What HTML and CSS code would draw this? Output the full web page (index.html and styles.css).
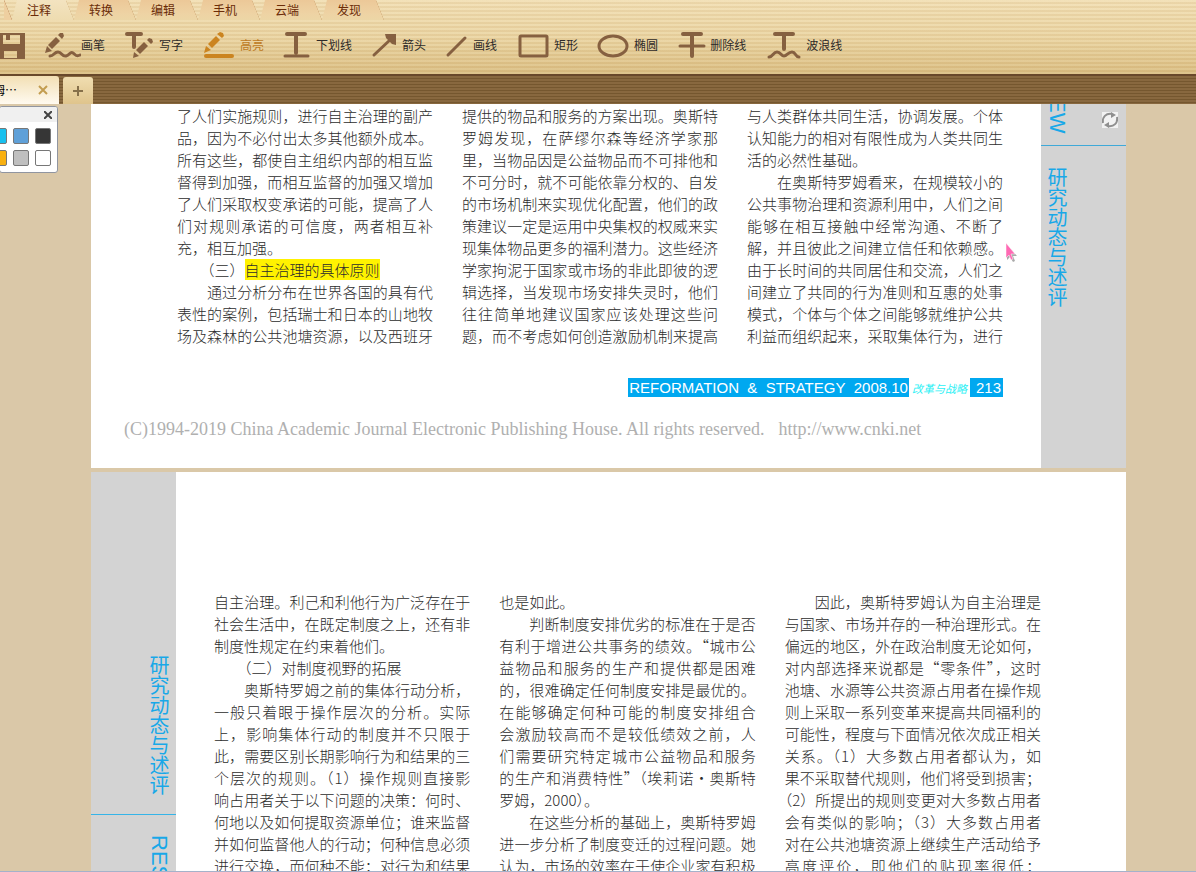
FILE: index.html
```html
<!DOCTYPE html>
<html lang="zh-CN">
<head>
<meta charset="utf-8">
<title>PDF 阅读器</title>
<link rel="stylesheet" href="styles.css">
</head>
<body>
<div class="app">
<header class="ribbon">
  <nav class="menu">
    <button class="menu-tab is-active">注释</button><button class="menu-tab">转换</button><button class="menu-tab">编辑</button><button class="menu-tab">手机</button><button class="menu-tab">云端</button><button class="menu-tab">发现</button>
  </nav>
  <div class="tools">
    <button class="tool" aria-label="保存"><svg width="26" height="30" viewBox="0 30 26 30"><path fill="#866040" fill-rule="evenodd" d="M0 33H25V59H0ZM3 35V44H20V35ZM4 51V58H17V51Z"/><path fill="#866040" d="M6 35h4v5h-4z"/></svg></button>
    <button class="tool"><svg width="36" height="30" viewBox="45 30 36 30"><path d="M45 53l2-7 5 5zM48 45l8-8 4 4-8 8zM58 35l2-2 3 0 1 3-2 3z" fill="#866040"/><path class="ln" d="M50 56c4 0 4-4 8-4s4 5 8 4 4-5 7-3 3 4 7 2"/></svg>画笔</button>
    <button class="tool"><svg width="35" height="30" viewBox="124 30 35 30"><path class="ln thick" d="M127 34H141M134 34V47"/><path fill="#866040" d="M133 58l1-6 5 4zM136 50l8-8 4 4-8 8zM147 40l2-2 3 1 1 3-2 2z"/></svg>写字</button>
    <button class="tool is-on"><svg width="38" height="30" viewBox="202 30 38 30"><path fill="#cb8420" d="M204 53l2-7 5 4zM208 44l8-8 4 4-8 8zM217 34l3-2 3 1 1 3-2 2z"/><path d="M206 56H232" stroke="#cb8420" stroke-width="4" stroke-linecap="round"/></svg>高亮</button>
    <button class="tool"><svg width="33" height="30" viewBox="283 30 33 30"><path class="ln thick" d="M287 34H305M296 34V53"/><path class="ln" d="M285 56H308"/></svg>下划线</button>
    <button class="tool"><svg width="31" height="30" viewBox="371 30 31 30"><path class="ln" d="M374 55L391 39"/><path fill="#866040" d="M385 34h11v11l-4-1-6-6z"/></svg>箭头</button>
    <button class="tool"><svg width="28" height="30" viewBox="445 30 28 30"><path class="ln" d="M448 55L465 38"/></svg>画线</button>
    <button class="tool"><svg width="38" height="30" viewBox="516 30 38 30"><rect class="ln" x="520" y="36" width="27" height="20" rx="1"/></svg>矩形</button>
    <button class="tool"><svg width="37" height="30" viewBox="597 30 37 30"><ellipse class="ln" cx="613" cy="46" rx="14" ry="10"/></svg>椭圆</button>
    <button class="tool"><svg width="33" height="30" viewBox="677 30 33 30"><path class="ln thick" d="M683 34H701M692 34V56"/><path class="ln" d="M680 46H704"/></svg>删除线</button>
    <button class="tool"><svg width="41" height="30" viewBox="765 30 41 30"><path class="ln thick" d="M775 34H793M784 34V49"/><path class="ln" d="M769 57c4 0 4-5 8-5s4 4 7 4 4-4 8-4 3 5 7 5"/></svg>波浪线</button>
  </div>
</header>
<div class="tabbar">
  <div class="doc-tab"><span class="doc-name">姆⋯</span><button class="tab-close" aria-label="关闭标签"><svg width="10" height="10" viewBox="0 0 10 10"><path d="M1 1L9 9M9 1L1 9" stroke="#c39d50" stroke-width="2"/></svg></button></div>
  <button class="new-tab" aria-label="新标签"><svg width="12" height="12" viewBox="0 0 12 12"><path d="M6 1V11M1 6H11" stroke="#86704a" stroke-width="2"/></svg></button>
</div>
<main class="viewer">
  <article class="page">
    <div class="sheet">
      <div class="columns">
        <section class="col">
          <p>了人们实施规则，进行自主治理的副产</p>
          <p>品，因为不必付出太多其他额外成本。</p>
          <p>所有这些，都使自主组织内部的相互监</p>
          <p>督得到加强，而相互监督的加强又增加</p>
          <p>了人们采取权变承诺的可能，提高了人</p>
          <p>们对规则承诺的可信度，两者相互补</p>
          <p class="end">充，相互加强。</p>
          <p class="end in">（三）<mark>自主治理的具体原则</mark></p>
          <p class="in">通过分析分布在世界各国的具有代</p>
          <p>表性的案例，包括瑞士和日本的山地牧</p>
          <p>场及森林的公共池塘资源，以及西班牙</p>
        </section>
        <section class="col">
          <p>提供的物品和服务的方案出现。奥斯特</p>
          <p>罗姆发现，在萨缪尔森等经济学家那</p>
          <p>里，当物品因是公益物品而不可排他和</p>
          <p>不可分时，就不可能依靠分权的、自发</p>
          <p>的市场机制来实现优化配置，他们的政</p>
          <p>策建议一定是运用中央集权的权威来实</p>
          <p>现集体物品更多的福利潜力。这些经济</p>
          <p>学家拘泥于国家或市场的非此即彼的逻</p>
          <p>辑选择，当发现市场安排失灵时，他们</p>
          <p>往往简单地建议国家应该处理这些问</p>
          <p>题，而不考虑如何创造激励机制来提高</p>
        </section>
        <section class="col">
          <p>与人类群体共同生活，协调发展。个体</p>
          <p>认知能力的相对有限性成为人类共同生</p>
          <p class="end">活的必然性基础。</p>
          <p class="in">在奥斯特罗姆看来，在规模较小的</p>
          <p>公共事物治理和资源利用中，人们之间</p>
          <p>能够在相互接触中经常沟通、不断了</p>
          <p>解，并且彼此之间建立信任和依赖感。</p>
          <p>由于长时间的共同居住和交流，人们之</p>
          <p>间建立了共同的行为准则和互惠的处事</p>
          <p>模式，个体与个体之间能够就维护公共</p>
          <p>利益而组织起来，采取集体行为，进行</p>
        </section>
      </div>
      <div class="folio"><span class="journal">REFORMATION&nbsp; &amp;&nbsp; STRATEGY&nbsp; 2008.10</span><span class="brand">改革与战略</span><span class="number">213</span></div>
      <p class="rights"><span>(C)1994-2019 China Academic Journal Electronic Publishing House. All rights reserved.</span><a href="#cnki">http://www.cnki.net</a></p>
    </div>
    <aside class="side side-right">
      <div class="side-en">EW</div>
      <div class="side-cn">研究动态与述评</div>
      <button class="refresh" aria-label="刷新"><svg width="16" height="16" viewBox="0 0 16 16" fill="none" stroke="#8f8f8f" stroke-width="2"><path d="M1 11C0 5 4 1 10 2M15 5C16 11 12 15 6 14"/><path d="M9 0l5 3-5 3zM7 10l-5 3 5 3z" fill="#8f8f8f" stroke="none"/></svg></button>
    </aside>
  </article>
  <article class="page page-next">
    <aside class="side side-left">
      <div class="side-cn">研究动态与述评</div>
      <div class="side-en">RES</div>
    </aside>
    <div class="sheet">
      <div class="columns">
        <section class="col">
          <p>自主治理。利己和利他行为广泛存在于</p>
          <p>社会生活中，在既定制度之上，还有非</p>
          <p class="end">制度性规定在约束着他们。</p>
          <p class="end in">（二）对制度视野的拓展</p>
          <p class="in">奥斯特罗姆之前的集体行动分析，</p>
          <p>一般只着眼于操作层次的分析。实际</p>
          <p>上，影响集体行动的制度并不只限于</p>
          <p>此，需要区别长期影响行为和结果的三</p>
          <p>个层次的规则。（1）操作规则直接影</p>
          <p>响占用者关于以下问题的决策：何时、</p>
          <p>何地以及如何提取资源单位；谁来监督</p>
          <p>并如何监督他人的行动；何种信息必须</p>
          <p>进行交换，而何种不能；对行为和结果</p>
        </section>
        <section class="col">
          <p class="end">也是如此。</p>
          <p class="in">判断制度安排优劣的标准在于是否</p>
          <p>有利于增进公共事务的绩效。“城市公</p>
          <p>益物品和服务的生产和提供都是困难</p>
          <p>的，很难确定任何制度安排是最优的。</p>
          <p>在能够确定何种可能的制度安排组合</p>
          <p>会激励较高而不是较低绩效之前，人</p>
          <p>们需要研究特定城市公益物品和服务</p>
          <p>的生产和消费特性”（埃莉诺·奥斯特</p>
          <p class="end">罗姆，2000）。</p>
          <p class="in">在这些分析的基础上，奥斯特罗姆</p>
          <p>进一步分析了制度变迁的过程问题。她</p>
          <p>认为，市场的效率在于使企业家有积极</p>
        </section>
        <section class="col">
          <p class="in">因此，奥斯特罗姆认为自主治理是</p>
          <p>与国家、市场并存的一种治理形式。在</p>
          <p>偏远的地区，外在政治制度无论如何，</p>
          <p>对内部选择来说都是“零条件”，这时</p>
          <p>池塘、水源等公共资源占用者在操作规</p>
          <p>则上采取一系列变革来提高共同福利的</p>
          <p>可能性，程度与下面情况依次成正相关</p>
          <p>关系。（1）大多数占用者都认为，如</p>
          <p>果不采取替代规则，他们将受到损害；</p>
          <p>（2）所提出的规则变更对大多数占用者</p>
          <p>会有类似的影响；（3）大多数占用者</p>
          <p>对在公共池塘资源上继续生产活动给予</p>
          <p>高度评价，即他们的贴现率很低；</p>
        </section>
      </div>
    </div>
  </article>
  <div class="palette">
    <div class="palette-head"><button class="palette-close" aria-label="关闭"><svg width="8" height="8" viewBox="0 0 8 8"><path d="M0 0L8 8M8 0L0 8" stroke="#444" stroke-width="2"/></svg></button></div>
    <div class="swatches">
      <button class="swatch cyan" aria-label="青色"></button><button class="swatch blue" aria-label="蓝色"></button><button class="swatch black" aria-label="黑色"></button>
      <button class="swatch orange" aria-label="橙色"></button><button class="swatch gray" aria-label="灰色"></button><button class="swatch white" aria-label="白色"></button>
    </div>
  </div>
  <svg class="cursor" width="12" height="20" viewBox="0 0 12 20"><path d="M2 2V17L5 14 8 19 10 18 8 13H12Z" fill="#aaa"/><path d="M1 0V15L4 12 6 17 8 16 6 11H10Z" fill="#ff69b4" stroke="#fff" stroke-width=".5"/></svg>
</main>
</div>
</body>
</html>
```
FILE: styles.css
```css
* { box-sizing: border-box; }
body { margin: 0; font-family: "Noto Sans CJK SC", sans-serif; }
button { border: 0; padding: 0; margin: 0; background: none; font: inherit; color: inherit; }
p { margin: 0; }
svg { display: block; flex: none; }
.app { height: 100vh; display: flex; flex-direction: column; overflow: hidden; }

.ribbon {
  flex: none;
  height: 74px;
  background:
    repeating-linear-gradient(rgba(255, 248, 220, .12) 0 2px, rgba(190, 150, 90, .12) 2px 4px),
    linear-gradient(#f1deb4, #ead4a2 50%, #d9bc80);
}
.menu { display: flex; height: 20px; }
.menu::before {
  content: "";
  width: 12px;
  background: linear-gradient(to top right, #eecfa0 46%, #cfa678 50%, transparent 54%) right / 8px 20px no-repeat;
}
.menu-tab {
  width: 62px;
  padding-right: 8px;
  font-size: 12px;
  line-height: 20px;
  color: #6b2c08;
  background:
    linear-gradient(to top right, transparent 46%, #c99f6c 50%, transparent 54%) right / 8px 20px no-repeat,
    linear-gradient(#ecc898, #eed3a4 70%, #ecd6a6);
  clip-path: polygon(5px 0, calc(100% - 8px) 0, 100% 100%, 0 100%);
}
.menu-tab.is-active {
  background:
    linear-gradient(to top right, transparent 46%, #d3b07c 50%, transparent 54%) right / 8px 20px no-repeat,
    linear-gradient(#f3e3c0, #eedcb0);
}
.tools { display: flex; gap: 19px; height: 30px; margin-top: 10px; }
.tool { display: flex; align-items: center; font-size: 12px; line-height: 32px; color: #2e2a28; white-space: nowrap; }
.tool.is-on { color: #bd791d; }
.ln { fill: none; stroke: #866040; stroke-width: 3px; stroke-linecap: round; }
.thick { stroke-width: 4px; stroke-linejoin: round; }

.tabbar {
  flex: none;
  display: flex;
  align-items: flex-end;
  gap: 4px;
  height: 30px;
  border-top: 2px solid #68482a;
  background: repeating-linear-gradient(#88683f 0 2px, #75572f 2px 3px);
}
.doc-tab {
  display: flex;
  align-items: center;
  justify-content: space-between;
  width: 59px;
  height: 28px;
  padding-right: 11px;
  border-radius: 0 3px 0 0;
  background: linear-gradient(#f2dfb4, #fffaf0);
  overflow: hidden;
}
.doc-name { font-size: 12px; line-height: 24px; margin-left: -7px; white-space: nowrap; }
.new-tab {
  display: flex;
  align-items: center;
  justify-content: center;
  width: 30px;
  height: 27px;
  border-radius: 3px 3px 0 0;
  background: linear-gradient(#f0ddb0, #dfc48c);
}

.viewer { position: relative; flex: 1; min-height: 0; overflow: hidden; background: #dac8a8; border-bottom: 1px solid #a5b2ca; }
.page { display: flex; margin: 0 70px 4px 91px; background: #fff; height: 364px; }
.sheet { flex: 1; min-width: 0; padding: 1px 38px 0 86px; }
.columns { display: grid; grid-template-columns: repeat(3, minmax(0, 1fr)); gap: 29px; }
.col { font-size: 15px; line-height: 22px; font-weight: 300; color: #2c2c2c; text-spacing-trim: trim-start; }
.col p { white-space: nowrap; text-align: justify; text-align-last: justify; }
.col .end { text-align-last: left; }
.col .in { padding-left: 30px; }
mark { background: #fff200; color: inherit; }
.page-next { height: auto; }
.page-next .sheet { padding: 119px 85px 0 38px; }

.folio { display: flex; justify-content: flex-end; align-items: center; margin-top: 31px; font: 15px/19px "Liberation Sans", sans-serif; color: #fff; }
.journal, .number { background: #00a8f0; white-space: nowrap; }
.journal { padding: 0 1px; }
.number { padding: 0 2px 0 6px; }
.brand { padding: 0 3px; font: italic 11px/18px "Noto Sans CJK SC", sans-serif; color: #2cf0f5; }
.rights { display: flex; gap: 14px; margin: 21px 0 0 -53px; font: 18px/22px "Liberation Serif", serif; color: #b0b0b0; white-space: nowrap; }
.rights a { color: inherit; text-decoration: none; }

.side { position: relative; flex: none; width: 85px; background: #d3d3d3; color: #18a8e8; }
.side-cn { writing-mode: vertical-rl; font-size: 20px; line-height: 20px; }
.side-en { writing-mode: vertical-rl; font: 22px/22px "Liberation Sans", sans-serif; }
.side-right .side-en { display: flex; justify-content: flex-end; width: 100%; height: 42px; padding: 0 58px 12px 5px; border-bottom: 1px solid #3fa9d8; }
.side-right .side-cn { margin: 21px 0 0 6px; }
.side-left .side-cn { height: 343px; width: 100%; padding: 183px 7px 0 58px; border-bottom: 1px solid #35b4e8; }
.side-left .side-en { margin: 20px 0 0 57px; height: 36px; }
.refresh { position: absolute; right: 8px; top: 8px; background: #f2f2f2; }

.palette { position: absolute; left: -1px; top: 2px; width: 59px; border: 1px solid #9095a0; border-radius: 3px; background: #fff; overflow: hidden; }
.palette-head { display: flex; justify-content: flex-end; align-items: center; height: 15px; padding-right: 5px; background: #f0f0f0; }
.swatches { display: grid; grid-template-columns: repeat(3, 16px); gap: 6px; justify-content: end; padding: 6px 6px 6px 0; }
.swatch { width: 16px; height: 16px; border: 1px solid #777; border-radius: 2px; }
.cyan { background: #18c0ee; }
.blue { background: #5fa0d8; }
.black { background: #363636; }
.orange { background: #f8b010; }
.gray { background: #bfbfbf; }
.white { background: #fff; }
.cursor { position: absolute; left: 1005px; top: 139px; }
```
